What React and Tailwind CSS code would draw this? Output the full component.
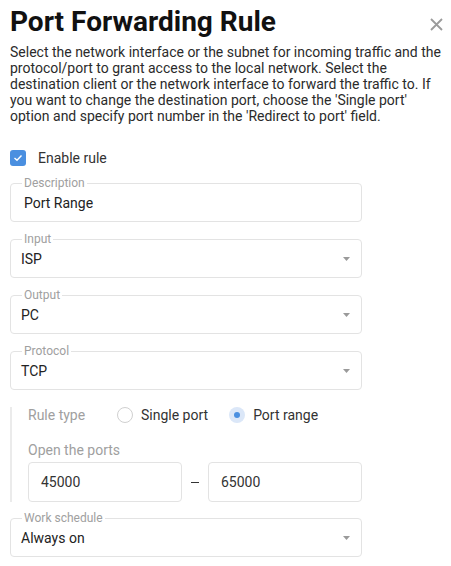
import React from "react";

function Field({ label, children, select, padLeft = "pl-[10px]" }) {
  return (
    <div className={`relative mt-[17px] h-[39px] w-[352px] rounded-[4px] border border-[#e3e3e3] flex items-center ${padLeft}`}>
      <span className="absolute left-[11px] top-[-8px] px-[2px] bg-white text-[12px] leading-[14px] text-[#a0a0a0]">
        {label}
      </span>
      <span className="text-[14px] leading-[16px] text-[#222]">{children}</span>
      {select && (
        <svg className="absolute right-[11px] top-[17px]" width="7" height="4" viewBox="0 0 7 4">
          <path d="M0 0 L7 0 L3.5 4 Z" fill="#9a9a9a" />
        </svg>
      )}
    </div>
  );
}

export default function App() {
  return (
    <div
      className="w-[451px] h-[566px] bg-white pl-[10px] pt-[5px] relative"
      style={{ fontFamily: "Roboto, 'Liberation Sans', sans-serif" }}
    >
      <svg className="absolute left-[430px] top-[18px]" width="13" height="13" viewBox="0 0 13 13">
        <path d="M1 1 L12 12 M12 1 L1 12" stroke="#9b9b9b" strokeWidth="1.8" />
      </svg>
      <h1 className="text-[28px] leading-[34px] font-bold text-[#111]">Port Forwarding Rule</h1>
      <p className="mt-[5px] w-[436px] text-[14px] leading-[16px] text-[#2b2b2b]">
        Select the network interface or the subnet for incoming traffic and the protocol/port to grant access to the local network. Select the destination client or the network interface to forward the traffic to. If you want to change the destination port, choose the 'Single port' option and specify port number in the 'Redirect to port' field.
      </p>
      <div className="mt-[26px] flex items-center h-[16px]">
        <div className="w-[16px] h-[16px] rounded-[3px] bg-[#4a8fe0] flex items-center justify-center">
          <svg width="10" height="8" viewBox="0 0 10 8">
            <path d="M1.5 4 L4 6.3 L8.5 1.5" stroke="#fff" strokeWidth="1.4" fill="none" />
          </svg>
        </div>
        <span className="ml-[12px] text-[14px] leading-[16px] text-[#333]">Enable rule</span>
      </div>

      <Field label="Description" padLeft="pl-[13px]">Port Range</Field>
      <Field label="Input" select>ISP</Field>
      <Field label="Output" select>PC</Field>
      <Field label="Protocol" select>TCP</Field>

      <div className="mt-[17px] border-l-2 border-[#ebebeb] pl-[16px]">
        <div className="flex items-center h-[16px] text-[14px] leading-[16px]">
          <span className="text-[#a0a0a0] w-[89px]">Rule type</span>
          <span className="w-[16px] h-[16px] rounded-full border border-[#d0d0d0] bg-white" />
          <span className="ml-[8px] text-[#333]">Single port</span>
          <span className="ml-[21px] w-[16px] h-[16px] rounded-full bg-[#dbe7f8] flex items-center justify-center">
            <span className="w-[6px] h-[6px] rounded-full bg-[#4a8fe0]" />
          </span>
          <span className="ml-[8px] text-[#333]">Port range</span>
        </div>
        <div className="mt-[19px] text-[14px] leading-[16px] text-[#a0a0a0]">Open the ports</div>
        <div className="mt-[4px] flex items-center">
          <div className="w-[154px] h-[40px] rounded-[4px] border border-[#e3e3e3] flex items-center pl-[12px] text-[14px] text-[#333]">45000</div>
          <span className="w-[26px] flex justify-center">
            <span className="w-[8px] h-px bg-[#333]" />
          </span>
          <div className="w-[154px] h-[40px] rounded-[4px] border border-[#e3e3e3] flex items-center pl-[12px] text-[14px] text-[#333]">65000</div>
        </div>
      </div>

      <div className="-mt-[1px]">
        <Field label="Work schedule" select>Always on</Field>
      </div>
    </div>
  );
}
